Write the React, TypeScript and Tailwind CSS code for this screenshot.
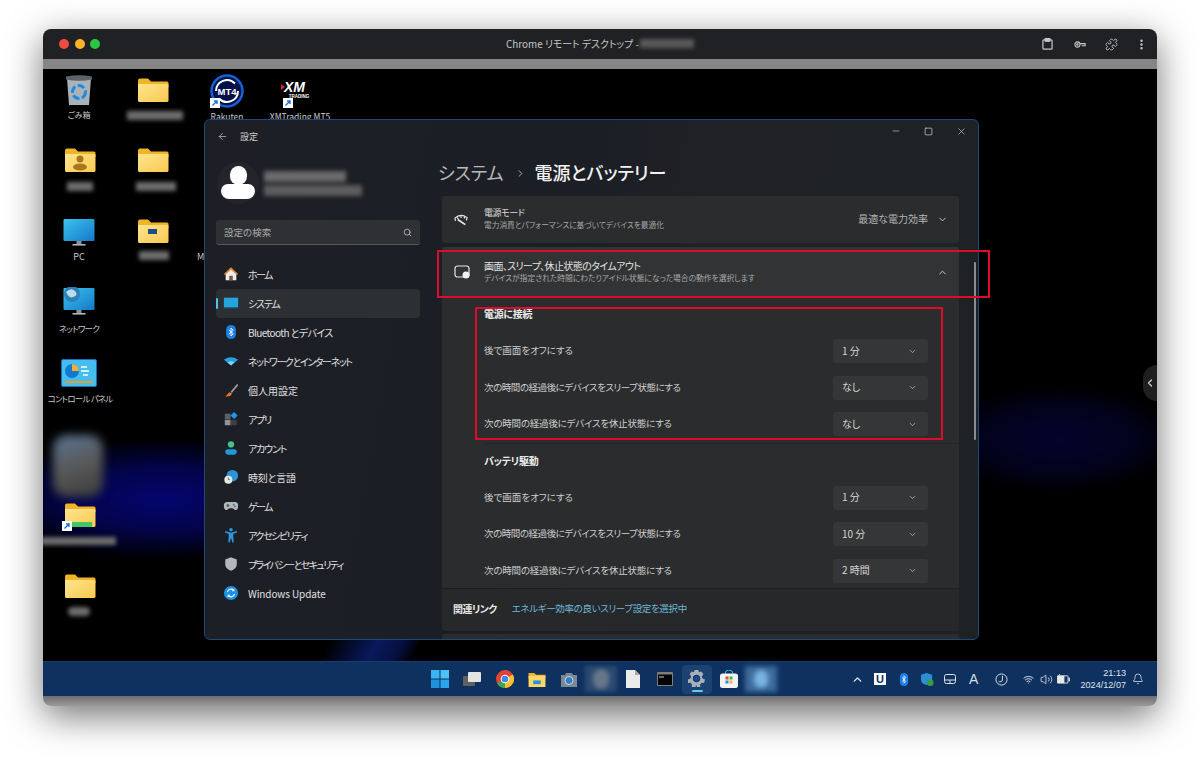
import React from "react";
import { ChevronDown, ChevronUp, ChevronRight, ArrowLeft, Search, Minus, X, Square, MoreVertical, Puzzle, Bell, Volume2, Wifi } from "lucide-react";

type P = { className?: string };

const Folder = ({ className = "" }: P) => (
  <svg viewBox="0 0 32 26" className={`w-[32px] h-[26px] ${className}`}>
    <defs>
      <linearGradient id="fold" x1="0" y1="0" x2="1" y2="1">
        <stop offset="0" stopColor="#fde58f" />
        <stop offset="1" stopColor="#fac94f" />
      </linearGradient>
    </defs>
    <path d="M1 3.5A2 2 0 0 1 3 1.5h8l3 3h16a1.5 1.5 0 0 1 1.5 1.5v4H1z" fill="#f0b429" />
    <path d="M1 7h29.5A1.2 1.2 0 0 1 31.5 8.2V23.5A1.5 1.5 0 0 1 30 25H2.5A1.5 1.5 0 0 1 1 23.5z" fill="url(#fold)" />
  </svg>
);

const Shortcut = ({ className = "" }: P) => (
  <svg viewBox="0 0 10 10" className={`w-[10px] h-[10px] ${className}`}>
    <rect width="10" height="10" fill="#fff" />
    <path d="M2.5 7.5 6.5 3.5M4 3h3v3" stroke="#1a73d0" strokeWidth="1.4" fill="none" />
  </svg>
);

const Monitor = ({ children }: { children?: React.ReactNode }) => (
  <svg viewBox="0 0 32 30" className="w-[32px] h-[30px]">
    <defs>
      <linearGradient id="mon" x1="0" y1="0" x2="1" y2="1">
        <stop offset="0" stopColor="#3cc4ee" />
        <stop offset="1" stopColor="#1478c8" />
      </linearGradient>
    </defs>
    <rect x="0.5" y="1" width="31" height="22" fill="url(#mon)" rx="1" />
    <rect x="13.5" y="23" width="5" height="3" fill="#8a9299" />
    <rect x="9.5" y="26" width="13" height="1.6" fill="#aeb4b9" />
    {children}
  </svg>
);

const Blur = ({ className = "" }: P) => <div className={`absolute bg-[#6d6d6d] blur-[2px] ${className}`} />;

const DesktopLabel = ({ x, y, children }: { x: string; y: string; children: React.ReactNode }) => (
  <span className={`absolute -translate-x-1/2 whitespace-nowrap leading-[12px] text-[#c9c9c9] ${x} ${y}`}>{children}</span>
);

const Desktop = () => (
  <>
    <div className="absolute left-0 top-[340px] w-[300px] h-[180px] bg-[radial-gradient(ellipse_62%_34%_at_40%_50%,#04056e_0%,#03044a_50%,transparent_100%)]" />
    <div className="absolute left-[936px] top-[310px] w-[178px] h-[120px] bg-[radial-gradient(ellipse_70%_45%_at_45%_50%,#03032c_0%,#02021c_60%,transparent_100%)]" />
    <div className="absolute left-[250px] top-[565px] w-[170px] h-[27px] bg-[linear-gradient(118deg,transparent_22%,#08195c_48%,#061040_62%,transparent_72%)]" />

    {/* row 1 */}
    <svg viewBox="0 0 26 31" className="absolute left-[23px] top-[6px] w-[26px] h-[31px]">
      <path d="M1 3 25 3 23 30H3z" fill="#a9b2b9" />
      <path d="M0 1.5Q13-1 26 1.5V4.5Q13 7 0 4.5z" fill="#5b6269" />
      <circle cx="13" cy="17" r="6.5" fill="none" stroke="#1f8be0" strokeWidth="3" strokeDasharray="7 2.5" />
    </svg>
    <DesktopLabel x="left-[36px] text-[8px]" y="top-[40px]">ごみ箱</DesktopLabel>
    <Folder className="absolute left-[94px] top-[8px]" />
    <Blur className="left-[84px] top-[42px] w-[56px] h-[9px]" />

    <svg viewBox="0 0 34 34" className="absolute left-[167px] top-[5px] w-[34px] h-[34px]">
      <circle cx="17" cy="17" r="15.5" fill="#05124a" stroke="#1660d8" strokeWidth="2.5" />
      <path d="M6 17a11 11 0 0 1 19-7.5M28 17a11 11 0 0 1-19 7.5" stroke="#fff" strokeWidth="2" fill="none" />
      <text x="17" y="20.5" textAnchor="middle" fontSize="9.5" fontWeight="700" fill="#fff" fontFamily="Liberation Sans, sans-serif">MT4</text>
    </svg>
    <Shortcut className="absolute left-[167px] top-[29px]" />
    <DesktopLabel x="left-[184px] text-[8.5px]" y="top-[41px]">Rakuten</DesktopLabel>

    <div className="absolute left-[241px] top-[12px] w-[30px] h-[20px] text-white">
      <span className="block text-[14px] leading-[13px] font-bold italic font-['Liberation_Sans',sans-serif]">XM</span>
      <span className="block text-[4.5px] leading-[5px] font-bold text-center font-['Liberation_Sans',sans-serif]">TRADING</span>
      <span className="absolute -left-[3px] top-[3px] w-0 h-0 border-y-[3px] border-y-transparent border-l-[4px] border-l-[#e0202a]" />
    </div>
    <Shortcut className="absolute left-[240px] top-[29px]" />
    <DesktopLabel x="left-[257px] text-[8.5px]" y="top-[41px]">XMTrading MT5</DesktopLabel>

    {/* row 2 */}
    <div className="absolute left-[21px] top-[78px]">
      <Folder />
      <svg viewBox="0 0 32 26" className="absolute inset-0 w-[32px] h-[26px]">
        <circle cx="16" cy="12" r="3.5" fill="#a9761a" />
        <ellipse cx="16" cy="20" rx="7" ry="3.5" fill="#a9761a" />
      </svg>
    </div>
    <Blur className="left-[24px] top-[113px] w-[26px] h-[9px]" />
    <Folder className="absolute left-[94px] top-[78px]" />
    <Blur className="left-[93px] top-[113px] w-[40px] h-[9px]" />

    {/* row 3 */}
    <div className="absolute left-[20px] top-[149px]"><Monitor /></div>
    <DesktopLabel x="left-[36px] text-[9px]" y="top-[182px]">PC</DesktopLabel>
    <div className="absolute left-[94px] top-[149px]">
      <Folder />
      <span className="absolute left-[11px] top-[11px] w-[9px] h-[5px] bg-[#1f4d8a]" />
    </div>
    <Blur className="left-[96px] top-[182px] w-[30px] h-[9px]" />
    <span className="absolute left-[154px] top-[182px] text-[9px] leading-[12px] text-[#c9c9c9]">M</span>

    {/* network */}
    <div className="absolute left-[20px] top-[218px]">
      <Monitor>
        <circle cx="9" cy="7" r="8" fill="#2e7fb8" />
        <path d="M3 5q5-5 9-1t-2 6Q6 12 3 5z" fill="#b9dcef" />
      </Monitor>
    </div>
    <DesktopLabel x="left-[36px] text-[8.5px] tracking-[-0.8px]" y="top-[253px]">ネットワーク</DesktopLabel>

    {/* control panel */}
    <svg viewBox="0 0 36 28" className="absolute left-[18px] top-[290px] w-[36px] h-[28px]">
      <rect x="0.5" y="0.5" width="35" height="27" rx="1.5" fill="#45bdf0" stroke="#0f6fc0" />
      <circle cx="11" cy="12" r="7" fill="#1478d0" />
      <path d="M11 12V5a7 7 0 0 1 7 7z" fill="#f0b030" />
      <path d="M20 8h6M20 12h8M22 16h5" stroke="#fff" strokeWidth="1.5" />
      <rect x="4" y="22" width="28" height="2" fill="#e0a030" />
    </svg>
    <DesktopLabel x="left-[37px] text-[8.5px] tracking-[-0.8px]" y="top-[323px]">コントロール パネル</DesktopLabel>

    {/* blurred icon */}
    <div className="absolute left-[10px] top-[366px] w-[50px] h-[62px] rounded-[14px] bg-[linear-gradient(160deg,#5a7696_0%,#585858_50%,#3a3a3a_100%)] blur-[5px]" />

    {/* shortcut folder */}
    <div className="absolute left-[21px] top-[433px]">
      <Folder />
      <span className="absolute left-[8px] top-[20px] w-[20px] h-[5px] bg-[#43c465]" />
      <Shortcut className="absolute -left-[2px] top-[19px]" />
    </div>
    <Blur className="-left-[3px] top-[468px] w-[76px] h-[8px]" />

    <Folder className="absolute left-[21px] top-[504px]" />
    <Blur className="left-[25px] top-[538px] w-[22px] h-[9px] rounded-full" />

    {/* side handle */}
    <div className="absolute right-0 top-[296px] w-[14px] h-[36px] rounded-l-full bg-[#1f1f20] flex items-center justify-center">
      <ChevronRight className="w-[12px] h-[12px] text-[#cfcfcf] rotate-180" strokeWidth={2.5} />
    </div>
  </>
);

const icons: Record<string, React.ReactNode> = {
  home: (
    <>
      <path d="M3 8v8h12V8L9 3z" fill="#ededed" />
      <path d="M1 9 9 1.5 17 9l-1.4 1.2L9 4.2 2.4 10.2z" fill="#e8883a" />
      <rect x="7" y="11" width="4" height="5" fill="#7a5a44" />
    </>
  ),
  system: (
    <>
      <rect x="1" y="3" width="16" height="10.5" fill="#26a4dc" />
      <rect x="1" y="13.5" width="16" height="1.5" fill="#17608f" />
    </>
  ),
  bt: (
    <>
      <rect x="3.5" y="1" width="11" height="16" rx="5.5" fill="#1a7fe8" />
      <path d="M6.5 6.5 11.5 11 9 13.5V4.5L11.5 7 6.5 11.5" stroke="#fff" strokeWidth="1" fill="none" />
    </>
  ),
  wifi: (
    <>
      <path d="M1 7.5Q9 2 17 7.5L9 14z" fill="#2a9fe0" />
      <path d="M5 10.5Q9 7.8 13 10.5L9 14z" fill="#7fd4f7" />
    </>
  ),
  brush: (
    <>
      <path d="M16 2 8.5 11l1.5 1.5L17 4z" fill="#9a9a9a" />
      <path d="M7.5 11.5c-2 .5-2 3-5 4.5 3 .8 7 .2 7.5-3z" fill="#e8742a" />
    </>
  ),
  apps: (
    <>
      <rect x="2" y="3" width="6.5" height="6.5" fill="#5b5f66" />
      <rect x="2" y="10" width="6.5" height="6" fill="#8f9296" />
      <rect x="9" y="10" width="6.5" height="6" fill="#3c3f45" />
      <path d="M12.5 1 16.5 5 12.5 9 8.5 5z" fill="#2196e8" />
    </>
  ),
  account: (
    <>
      <circle cx="9" cy="5" r="3.5" fill="#45c48a" />
      <path d="M2.5 13.5A3 3 0 0 1 5.5 10.5h7a3 3 0 0 1 3 3 3.2 3.2 0 0 1-3 3h-7a3.2 3.2 0 0 1-3-3z" fill="#1f9ad8" />
    </>
  ),
  time: (
    <>
      <circle cx="10.5" cy="7.5" r="6.5" fill="#2b93d8" />
      <circle cx="6" cy="12" r="4.5" fill="#e8e8e8" />
      <path d="M6 9.5V12h2" stroke="#555" strokeWidth=".8" fill="none" />
    </>
  ),
  game: (
    <>
      <path d="M4.5 4.5h9a3.5 3.5 0 0 1 3.5 4q0 5-2.5 5c-2 0-2-2-5.500-2s-3.500 2-5.500 2Q1 13.500 1 8.500a3.500 3.500 0 0 1 3.500-4z" fill="#b4b7ba" />
      <circle cx="12" cy="7.500" r="1" fill="#1b79d0" />
      <circle cx="13.500" cy="9.500" r="1" fill="#1b79d0" />
      <circle cx="5.500" cy="8.500" r="1.500" fill="#555" />
    </>
  ),
  access: (
    <>
      <circle cx="9" cy="3" r="2" fill="#2c97e0" />
      <path d="M2.500 4.500 9 6.500l6.500-2L16 6l-4.500 2 .5 9.500h-1.500L9 12l-1.500 5.500H6L6.500 8 2 6z" fill="#2c97e0" />
    </>
  ),
  shield: <path d="M9 1.500 15.500 4v5c0 4-3 6.500-6.500 7.500C5.500 15.500 2.500 13 2.500 9V4z" fill="#b4b8bb" />,
  update: (
    <>
      <circle cx="9" cy="9" r="8" fill="#1b8fe0" />
      <path d="M5 8a4 4 0 0 1 7-2M13 10a4 4 0 0 1-7 2" stroke="#fff" strokeWidth="1.300" fill="none" />
      <path d="M12.800 3.800V7H9.600zM5.200 14.200V11h3.200z" fill="#fff" />
    </>
  ),
};

const NavIcon = ({ name }: { name: string }) => (
  <svg viewBox="0 0 18 18" className="w-[16px] h-[16px] shrink-0">{icons[name]}</svg>
);

const nav: [string, string, string][] = [
  ["home", "ホーム", "tracking-[-1.6px]"],
  ["system", "システム", "tracking-[-1.2px]"],
  ["bt", "Bluetooth とデバイス", "tracking-[-0.6px]"],
  ["wifi", "ネットワークとインターネット", "tracking-[-1.4px]"],
  ["brush", "個人用設定", ""],
  ["apps", "アプリ", "tracking-[-1.3px]"],
  ["account", "アカウント", "tracking-[-1.2px]"],
  ["time", "時刻と言語", "tracking-[-0.2px]"],
  ["game", "ゲーム", "tracking-[-1.6px]"],
  ["access", "アクセシビリティ", "tracking-[-1.4px]"],
  ["shield", "プライバシーとセキュリティ", "tracking-[-1.6px]"],
  ["update", "Windows Update", "tracking-[-0.1px]"],
];

const Sidebar = () => (
  <aside className="w-[225px] shrink-0 h-full flex flex-col pl-[11px] pr-[10px]">
    <div className="h-[33px] flex items-center pl-[1px] gap-[12px] shrink-0">
      <ArrowLeft className="w-[11px] h-[11px] text-[#c9c9c9]" strokeWidth={1.5} />
      <span className="text-[9px] text-[#cfcfcf]">設定</span>
    </div>
    <div className="flex items-center h-[50px] shrink-0 mt-[5px]">
      <div className="w-[42px] h-[42px] rounded-full bg-[#23252b] flex flex-col items-center shrink-0 ml-[1px] pt-[4px]">
        <span className="w-[17px] h-[19px] rounded-full bg-white" />
        <span className="w-[34px] h-[15px] -mt-[1px] rounded-t-[12px] rounded-b-[14px] bg-white" />
      </div>
      <div className="ml-[5px] flex flex-col gap-[3px] blur-[2px]">
        <span className="w-[82px] h-[11px] bg-[#6a6a6a]" />
        <span className="w-[98px] h-[11px] bg-[#5d5d5d]" />
      </div>
    </div>
    <div className="mt-[12px] h-[25px] shrink-0 flex items-center justify-between px-[8px] rounded-[3px] bg-[#2e3034] border-b border-[#55575a]">
      <span className="text-[9.500px] text-[#a9a9a9]">設定の検索</span>
      <Search className="w-[9px] h-[9px] text-[#cfcfcf]" strokeWidth={2} />
    </div>
    <nav className="mt-[14.500px] flex flex-col">
      {nav.map(([icon, label, tr], i) => (
        <div key={label} className={`relative h-[29px] flex items-center gap-[9px] pl-[7px] rounded-[4px] ${i === 1 ? "bg-[#2c3033]" : ""}`}>
          {i === 1 && <span className="absolute left-[0px] top-[9px] w-[2px] h-[11px] rounded-full bg-[#4cc2ff]" />}
          <NavIcon name={icon} />
          <span className={`text-[10px] text-[#e0e0e0] whitespace-nowrap ${tr}`}>{label}</span>
        </div>
      ))}
    </nav>
  </aside>
);

const Select = ({ value }: { value: string }) => (
  <div className="w-[95px] h-[24px] shrink-0 rounded-[3px] bg-[#353637] flex items-center justify-between pl-[9px] pr-[11px] text-[#d6d6d6]">
    <span className="text-[10px] -mt-[2px]">{value}</span>
    <ChevronDown className="w-[9px] h-[9px] text-[#bdbdbd]" strokeWidth={2} />
  </div>
);

const rowsTrack = ["", "tracking-[-0.45px]", "tracking-[-0.2px]"];

const Section = ({ title, rows, divided }: { title: string; rows: [string, string][]; divided?: boolean }) => (
  <section className={divided ? "border-t border-[#232526]" : ""}>
    <h3 className="h-[36px] flex items-center pb-[3px] text-[10px] font-bold text-[#ececec] tracking-[-0.3px]">{title}</h3>
    {rows.map(([label, value], i) => (
      <div key={label} className="h-[36.500px] flex items-center justify-between pr-[31px]">
        <span className={`text-[9.500px] -mt-[2px] text-[#d0d0d0] ${rowsTrack[i]}`}>{label}</span>
        <Select value={value} />
      </div>
    ))}
  </section>
);

const Main = () => (
  <main className="relative flex-1 min-w-0 h-full flex flex-col overflow-hidden">
    <div className="h-[22px] shrink-0 flex justify-end items-center text-[#c8c8c8]">
      <span className="w-[33px] flex justify-center"><Minus className="w-[10px] h-[10px]" strokeWidth={1.5} /></span>
      <span className="w-[33px] flex justify-center"><Square className="w-[9px] h-[9px]" strokeWidth={2} /></span>
      <span className="w-[33px] flex justify-center"><X className="w-[11px] h-[11px]" strokeWidth={1.5} /></span>
    </div>
    <div className="h-[32px] mt-[15px] shrink-0 flex items-center pl-[8px] text-[18px]">
      <span className="text-[#b9b9b9] -mt-[1px]">システム</span>
      <ChevronRight className="w-[11px] h-[11px] ml-[11px] mr-[9px] text-[#b9b9b9]" strokeWidth={2} />
      <span className="text-[#f2f2f2] font-medium -mt-[1px]">電源とバッテリー</span>
    </div>
    <div className="ml-[12px] w-[517px] mt-[7px] flex flex-col shrink-0">
      <div className="h-[47px] rounded-[3px] bg-[#2a2c2d] flex items-center pl-[12px] pr-[11px]">
        <svg viewBox="0 0 16 16" className="w-[15px] h-[15px] shrink-0 text-[#e8e8e8]" fill="none" stroke="currentColor" strokeWidth="1.300">
          <path d="M1.500 9.500 1 6.500Q7 1 14 6l-.8 3M3.500 6l1 1.500M7.500 4.500v2M11.500 5.500l-.8 1.500" />
          <path d="M4 8l8 5.500" strokeWidth="1.800" />
        </svg>
        <div className="ml-[15px] flex-1 flex flex-col -mt-[2px]">
          <span className="text-[9px] tracking-[-0.4px] leading-[12px] text-[#dadada]">電源モード</span>
          <span className="text-[7.700px] leading-[11px] text-[#a8a8a8]">電力消費とパフォーマンスに基づいてデバイスを最適化</span>
        </div>
        <span className="text-[10px] text-[#b5b5b5] -mt-[2px]">最適な電力効率</span>
        <ChevronDown className="ml-[9px] w-[11px] h-[11px] text-[#cfcfcf]" strokeWidth={2} />
      </div>
      <div className="mt-[4px] h-[50px] rounded-t-[3px] bg-[#323334] flex items-center pl-[12px] pr-[11px]">
        <svg viewBox="0 0 16 14" className="w-[16px] h-[14px] shrink-0" fill="none">
          <rect x="1" y="1" width="14" height="11" rx="2.500" stroke="#e8e8e8" strokeWidth="1.200" />
          <circle cx="12" cy="10" r="3.500" fill="#f2f2f2" />
        </svg>
        <div className="ml-[14px] flex-1 flex flex-col -mt-[2px]">
          <span className="text-[10px] tracking-[-0.6px] leading-[12px] text-[#e2e2e2]">画面、スリープ、休止状態のタイムアウト</span>
          <span className="text-[7.750px] leading-[11px] text-[#a8a8a8]">デバイスが指定された時間にわたりアイドル状態になった場合の動作を選択します</span>
        </div>
        <ChevronUp className="w-[11px] h-[11px] text-[#d8d8d8]" strokeWidth={2} />
      </div>
      <div className="h-[291px] bg-[#2a2c2d] pl-[42px] overflow-hidden">
        <Section title="電源に接続" rows={[["後で画面をオフにする", "1 分"], ["次の時間の経過後にデバイスをスリープ状態にする", "なし"], ["次の時間の経過後にデバイスを休止状態にする", "なし"]]} />
        <Section divided title="バッテリ駆動" rows={[["後で画面をオフにする", "1 分"], ["次の時間の経過後にデバイスをスリープ状態にする", "10 分"], ["次の時間の経過後にデバイスを休止状態にする", "2 時間"]]} />
      </div>
      <div className="mt-[1px] h-[42px] rounded-b-[3px] bg-[#26282a] flex items-center pl-[11px] pb-[3px] gap-[15px]">
        <span className="text-[10px] font-bold text-[#e8e8e8] tracking-[-0.6px]">関連リンク</span>
        <span className="text-[9.500px] tracking-[-0.35px] text-[#6fb6d6]">エネルギー効率の良いスリープ設定を選択中</span>
      </div>
      <div className="mt-[3px] h-[20px] rounded-t-[3px] bg-[#2a2c2d]" />
    </div>
    <span className="absolute left-[544px] top-[142px] w-[2px] h-[178px] rounded-full bg-[#8c8c8c]" />
  </main>
);

const Settings = () => (
  <div className="absolute left-[161px] top-[50px] w-[775px] h-[521px] flex rounded-[6px] overflow-hidden border border-[#1c4a7e] bg-[linear-gradient(100deg,#1d1f25_0%,#1c1e26_45%,#1f2125_60%,#1f2224_100%)]">
    <Sidebar />
    <Main />
  </div>
);

const Red = ({ className = "" }: P) => <div className={`absolute border-2 border-[#e00a2c] ${className}`} />;

const TrayBt = () => (
  <svg viewBox="0 0 10 16" className="w-[10px] h-[13px]"><rect width="10" height="16" rx="5" fill="#1a7fe8" /><path d="M3 5.500 7 10.500 5 12.500V3.500L7 5.500 3 10.500" stroke="#fff" strokeWidth="1" fill="none" /></svg>
);

const Taskbar = () => (
  <div className="h-[35px] shrink-0 relative flex items-center justify-center bg-[#0e3160] border-t border-[#173d70]">
    <div className="flex items-center h-full">
      <span className="w-[32px] flex justify-center">
        <svg viewBox="0 0 18 18" className="w-[18px] h-[18px]"><rect width="8.500" height="8.500" fill="#38b6f1" /><rect x="9.500" width="8.500" height="8.500" fill="#4cc2f5" /><rect y="9.500" width="8.500" height="8.500" fill="#1d92dd" /><rect x="9.500" y="9.500" width="8.500" height="8.500" fill="#2aa4ea" /></svg>
      </span>
      <span className="w-[33px] flex justify-center">
        <svg viewBox="0 0 18 14" className="w-[18px] h-[14px]"><rect y="4" width="12" height="10" rx="1" fill="#5f6061" /><rect x="5" width="13" height="10" rx="1" fill="#e4e4e4" /></svg>
      </span>
      <span className="w-[32px] flex justify-center">
        <svg viewBox="0 0 18 18" className="w-[18px] h-[18px]"><circle cx="9" cy="9" r="9" fill="#e14434" /><path d="M9 9 1.200 13.500A9 9 0 0 0 9 18z" fill="#3aa757" /><path d="M9 9 9 18A9 9 0 0 0 16.800 4.500z" fill="#fbc02d" /><circle cx="9" cy="9" r="4.300" fill="#fff" /><circle cx="9" cy="9" r="3.300" fill="#3f87f0" /></svg>
      </span>
      <span className="w-[32px] flex justify-center">
        <svg viewBox="0 0 18 16" className="w-[18px] h-[15px]"><path d="M0 1h6l2 2h10v4H0z" fill="#f0b429" /><rect y="4" width="18" height="12" fill="#fcd768" /><rect x="5" y="9" width="8" height="4" fill="#2a8fd8" /></svg>
      </span>
      <span className="w-[32px] flex justify-center">
        <svg viewBox="0 0 18 15" className="w-[18px] h-[15px]"><path d="M1 3h4l1-2h6l1 2h4v12H1z" fill="#7c8894" /><circle cx="9" cy="8.500" r="4" fill="#2f7fc8" stroke="#cfd6dc" /></svg>
      </span>
      <span className="w-[32px] h-[26px] flex justify-center items-center bg-[#2c4a70] blur-[2px]"><span className="w-[16px] h-[20px] rounded-full bg-[#66778a]" /></span>
      <span className="w-[32px] flex justify-center">
        <svg viewBox="0 0 14 18" className="w-[14px] h-[18px]"><path d="M0 0h9l5 5v13H0z" fill="#ebebeb" /><path d="M9 0l5 5H9z" fill="#a9a9a9" /></svg>
      </span>
      <span className="w-[32px] flex justify-center">
        <svg viewBox="0 0 16 14" className="w-[16px] h-[14px]"><rect width="16" height="14" rx="1" fill="#7d7d7d" /><rect x="1" y="2.500" width="14" height="10.500" fill="#050505" /><path d="M2 5h5" stroke="#ccc" /></svg>
      </span>
      <span className="relative w-[30px] h-[29px] mx-[1px] flex justify-center items-center rounded-[4px] bg-[#1c4272]">
        <svg viewBox="0 0 18 18" className="w-[17px] h-[17px] -mt-[2px]"><path d="M7 0h4l.7 2.500 2.400-1 2.300 3-1.800 2 .8 2.500 2.600 1-1 3.700-2.700-.2-1.600 2 .5 2.500-3.600.9L9 16l-1.600 2.900-3.600-.9.500-2.500-1.600-2-2.700.2L0 10l2.600-1 .8-2.500-1.800-2 2.300-3 2.400 1z" fill="#a7b0b8" /><circle cx="9" cy="9" r="3.500" fill="#134a92" stroke="#0c2a50" /></svg>
        <span className="absolute bottom-[2px] left-[10px] w-[11px] h-[2px] rounded-full bg-[#62c8f5]" />
      </span>
      <span className="w-[32px] flex justify-center">
        <svg viewBox="0 0 18 18" className="w-[18px] h-[18px]"><path d="M5 4a4 4 0 0 1 8 0" stroke="#3ab6e8" fill="none" /><rect y="3.500" width="18" height="14.500" rx="2.500" fill="#f3f3f3" /><rect x="5.500" y="6.500" width="3" height="3" fill="#e4572e" /><rect x="9.500" y="6.500" width="3" height="3" fill="#4caf50" /><rect x="5.500" y="10.500" width="3" height="3" fill="#2a8fd8" /><rect x="9.500" y="10.500" width="3" height="3" fill="#f5b82e" /></svg>
      </span>
      <span className="w-[32px] h-[26px] flex justify-center items-center bg-[#3d6c9c] blur-[2.500px]"><span className="w-[14px] h-[18px] rounded-full bg-[#7ab4de]" /></span>
    </div>
    <div className="absolute left-[808px] top-0 h-full flex items-center text-[#e8e8e8]">
      <ChevronUp className="w-[13px] h-[13px]" strokeWidth={2.500} />
      <span className="ml-[10px] w-[12px] h-[12px] bg-white text-[#0e3160] text-[11px] leading-[12px] font-bold text-center font-['Liberation_Sans',sans-serif]">U</span>
      <span className="ml-[13px] flex"><TrayBt /></span>
      <svg viewBox="0 0 14 14" className="ml-[12px] w-[13px] h-[13px]"><path d="M6 0l6 2v5c0 3-2 5-6 6-4-1-6-3-6-6V2z" fill="#2b8fd0" /><circle cx="10" cy="10.500" r="3.500" fill="#3a9a48" /></svg>
      <svg viewBox="0 0 12 10" className="ml-[10px] w-[12px] h-[10px]" fill="none" stroke="#dfe5ea"><rect x=".5" y=".5" width="11" height="9" rx="2" /><path d="M.5 6h11M6 6v3.500" /></svg>
      <span className="ml-[13px] w-[10px] text-[14px] leading-[16px] font-['Liberation_Sans',sans-serif] text-[#d9dfe5]">A</span>
      <svg viewBox="0 0 14 14" className="ml-[16px] w-[13px] h-[13px]" fill="none" stroke="#e8e8e8"><circle cx="7" cy="7" r="6" /><path d="M8 3v4.500A2.500 2.500 0 0 1 4 9" /></svg>
      <Wifi className="ml-[15px] w-[11px] h-[11px]" strokeWidth={2} />
      <Volume2 className="ml-[6px] w-[13px] h-[13px]" strokeWidth={1.500} />
      <svg viewBox="0 0 14 11" className="ml-[4px] w-[13px] h-[10px]"><rect y="2" width="12" height="8" rx="1" fill="none" stroke="#e8e8e8" /><rect y="2" width="8" height="8" fill="#e8e8e8" /><rect x="12.500" y="4" width="1.500" height="4" fill="#e8e8e8" /><path d="M2 2 3 0" stroke="#e8e8e8" /></svg>
      <div className="ml-[9px] flex flex-col items-end text-[9.100px] leading-[12px] text-[#dfe5ea] w-[47px] font-['Liberation_Sans',sans-serif]">
        <span>21:13</span>
        <span>2024/12/07</span>
      </div>
      <Bell className="ml-[6px] w-[12px] h-[12px]" strokeWidth={1.500} />
    </div>
  </div>
);

export default function App() {
  return (
    <div className="w-[1200px] h-[763px] bg-white pt-[29px] pl-[43px] overflow-hidden [font-family:'Noto_Sans_CJK_JP','Noto_Sans',sans-serif] [font-feature-settings:'palt']">
      <div className="relative w-[1114px] h-[677px] flex flex-col rounded-[8px] overflow-hidden shadow-[0_10px_36px_rgba(0,0,0,0.55)]">
        <header className="h-[30px] shrink-0 relative flex items-center justify-center bg-[#202124]">
          <div className="absolute left-[16px] flex gap-[5.500px]">
            <span className="w-[10px] h-[10px] rounded-full bg-[#ee4b40]" />
            <span className="w-[10px] h-[10px] rounded-full bg-[#f7b32b]" />
            <span className="w-[10px] h-[10px] rounded-full bg-[#2bc742]" />
          </div>
          <div className="flex items-center gap-[1px] text-[9.900px] text-[#c6c6c6]">
            <span>Chrome リモート デスクトップ - </span>
            <span className="w-[54px] h-[9px] bg-[#5a5a5a] blur-[2px]" />
          </div>
          <div className="absolute right-0 top-0 h-full flex items-center text-[#c9c9c9]">
            <svg viewBox="0 0 12 13" className="w-[11px] h-[12px] mr-[21px]" fill="none" stroke="currentColor" strokeWidth="1.300"><rect x="1" y="2" width="10" height="10" rx="1" /><rect x="3.500" y="0.500" width="5" height="3" fill="currentColor" /></svg>
            <svg viewBox="0 0 14 8" className="w-[12px] h-[7px] mr-[19px]" fill="none" stroke="currentColor" strokeWidth="1.300"><circle cx="4" cy="4" r="3" /><circle cx="4" cy="4" r=".8" /><path d="M7 3h6v2.500H9" /></svg>
            <Puzzle className="w-[13px] h-[13px] mr-[17px]" strokeWidth={1.700} />
            <MoreVertical className="w-[13px] h-[13px] mr-[9px]" strokeWidth={2.500} />
          </div>
        </header>
        <div className="h-[10px] shrink-0 bg-[#868686]" />
        <div className="relative flex-1 min-h-0 bg-black">
          <Desktop />
          <Settings />
          <Red className="left-[394px] top-[181px] w-[553px] h-[48px]" />
          <Red className="left-[432px] top-[238px] w-[468px] h-[133px]" />
        </div>
        <Taskbar />
        <div className="h-[10px] shrink-0 bg-[linear-gradient(#6f6f6f,#9a9a9a)]" />
      </div>
    </div>
  );
}
